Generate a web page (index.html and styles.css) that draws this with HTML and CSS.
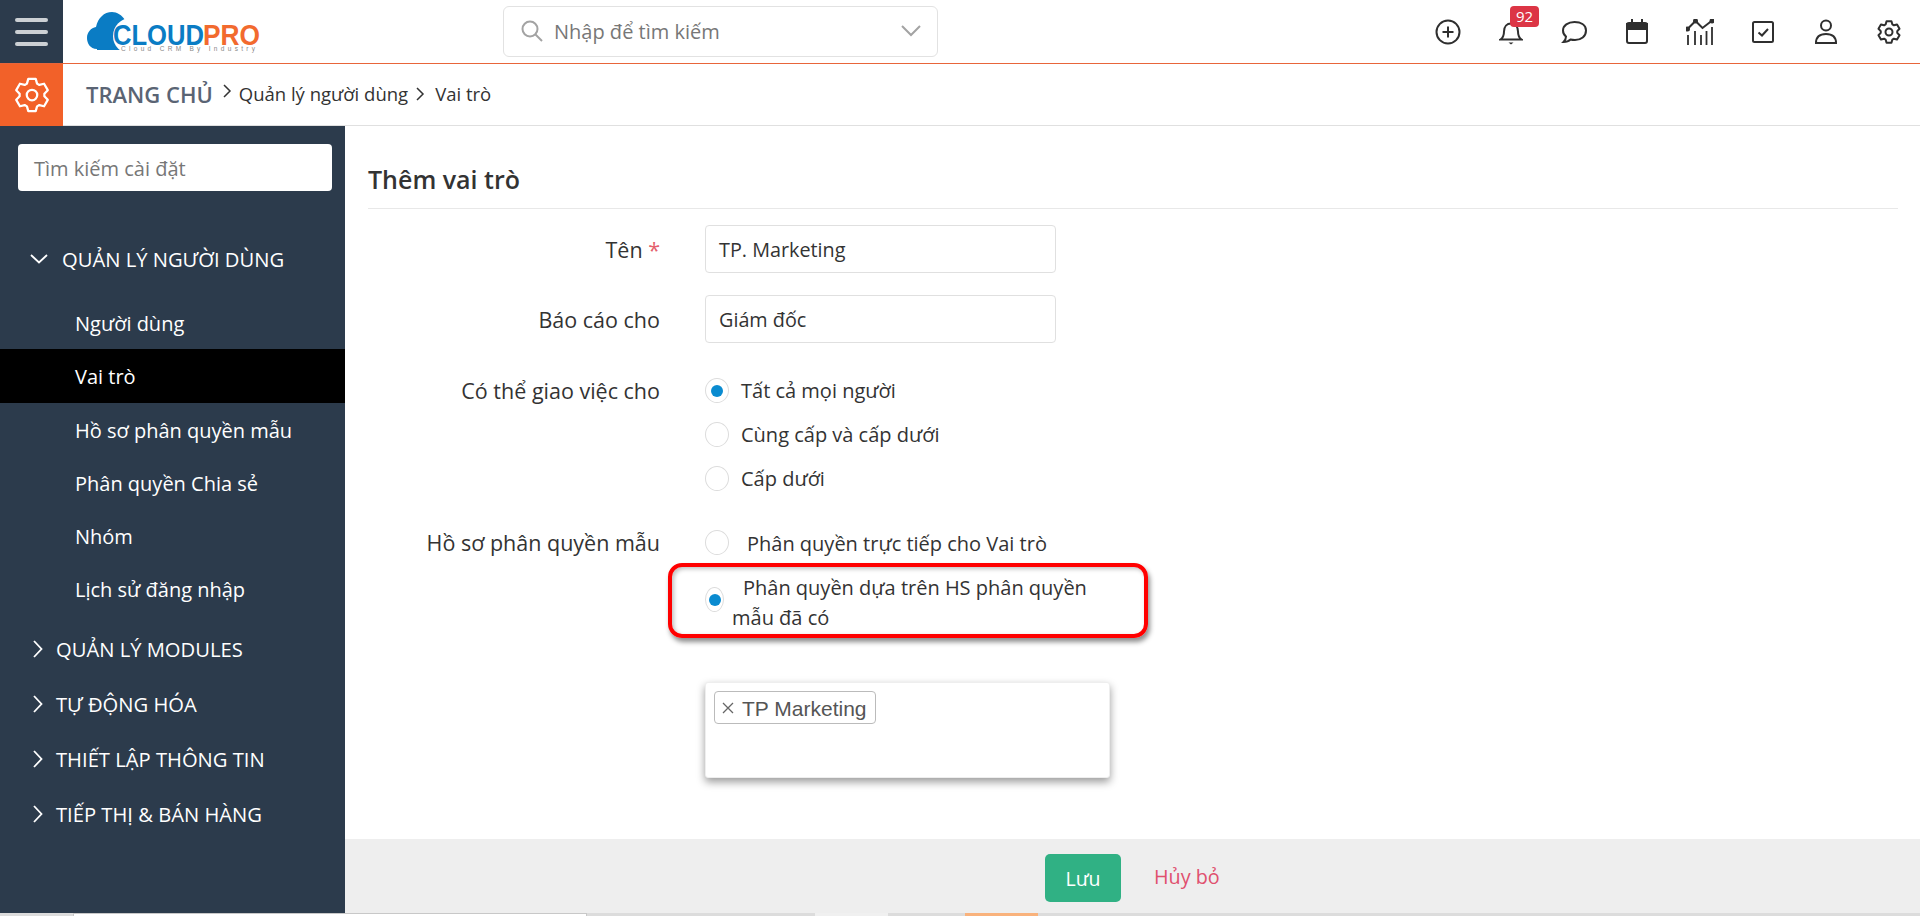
FILE: index.html
```html
<!DOCTYPE html>
<html lang="vi">
<head>
	<meta charset="UTF-8">
	<title>Thêm vai trò</title>
	<link rel="stylesheet" href="styles.css">
</head>
<body>
	<div class="page">
		<!-- thanh tren -->
		<header class="topbar">
			<div class="menu-btn"><span></span><span></span><span></span></div>
			<div class="logo">
				<svg width="180" height="44" viewBox="0 0 180 44">
					<path fill="#0a7cc4" d="M10 37C3 37 0 31 0 26c0-6 4-10 9-11C11 6 17 0 25 0c5 0 10 3 13 8 3-1 6 0 8 2v28H10z"/>
					<circle cx="44" cy="24" r="18" fill="#fff"/>
					<text x="26" y="33" class="logo-blue" textLength="91" lengthAdjust="spacingAndGlyphs">CLOUD</text>
					<text x="116" y="33" class="logo-orange" textLength="57" lengthAdjust="spacingAndGlyphs">PRO</text>
					<text x="34" y="39" class="logo-small" textLength="134">Cloud CRM By Industry</text>
				</svg>
			</div>
			<div class="top-search">
				<svg width="24" height="24" viewBox="0 0 24 24" fill="none" stroke="#a3a3a3" stroke-width="2"><circle cx="10" cy="10" r="7.500"/><path d="M15.500 15.500l6.500 6.500"/></svg>
				<span class="top-search-text">Nhập để tìm kiếm</span>
				<svg class="top-search-arrow" width="20" height="12" viewBox="0 0 20 12" fill="none" stroke="#a3a3a3" stroke-width="2"><path d="M1 1l9 9 9-9"/></svg>
			</div>
			<nav class="top-icons">
				<a class="ico"><svg width="26" height="26" viewBox="0 0 26 26" fill="none" stroke="#2f2f2f" stroke-width="2"><circle cx="13" cy="13" r="11.500"/><path d="M13 7.500v11M7.500 13h11"/></svg></a>
				<a class="ico"><svg width="24" height="26" viewBox="0 0 24 26" fill="none" stroke="#2f2f2f" stroke-width="2"><path d="M1.500 20.500c3-2 3.500-4 3.500-8 0-5 3-8 7-8s7 3 7 8c0 4 .5 6 3.500 8z"/><path d="M12 1.500v3"/><path d="M9.500 23.500h5l-2.500 2z" fill="#2f2f2f" stroke="none"/></svg><b class="badge">92</b></a>
				<a class="ico"><svg width="26" height="24" viewBox="0 0 26 24" fill="none" stroke="#2f2f2f" stroke-width="2"><path d="M13.500 2C7 2 2 5.500 2 10.500c0 2.500 1 4.500 3 6 0 2-1 4-2.500 5.500 3 0 5.500-1 7-2.500 1.500.4 3 .5 4.500.5 6 0 11-3.500 11-9.500S19.500 2 13.500 2z"/></svg></a>
				<a class="ico"><svg width="22" height="25" viewBox="0 0 22 25" fill="none" stroke="#2f2f2f" stroke-width="2"><rect x="1" y="4" width="20" height="20" rx="2"/><path d="M1 5h20v5H1z" fill="#2f2f2f"/><path d="M6 0v4M16 0v4"/></svg></a>
				<a class="ico"><svg width="28" height="26" viewBox="0 0 28 26" fill="none" stroke="#2f2f2f" stroke-width="2"><path d="M1.500 10L9.500 2l7 7 9-7"/><path d="M2 16v10M9 12v14M15 16v10M20.500 12v14M26 8v18" stroke-width="1.800"/><circle cx="1.500" cy="10" r="1.500" fill="#2f2f2f"/><circle cx="9.500" cy="2" r="1.500" fill="#2f2f2f"/><circle cx="26" cy="2" r="1.500" fill="#2f2f2f"/></svg></a>
				<a class="ico"><svg width="22" height="22" viewBox="0 0 22 22" fill="none" stroke="#2f2f2f" stroke-width="2"><rect x="1" y="1" width="20" height="20" rx="1.500"/><path d="M6.500 11.500l3.500 3 6-6.500"/></svg></a>
				<a class="ico"><svg width="22" height="25" viewBox="0 0 22 25" fill="none" stroke="#2f2f2f" stroke-width="2"><circle cx="11" cy="6.500" r="5"/><path d="M1 24c0-6 3-9 10-9s10 3 10 9z"/></svg></a>
				<a class="ico"><svg width="24" height="24" viewBox="0 0 24 24" fill="none" stroke="#2f2f2f" stroke-width="2" stroke-linejoin="round"><circle cx="12" cy="12" r="3.500"/><path d="M8.620 4.420L9.530 1.280H14.470L15.380 4.420L16.880 5.290L20.040 4.500L22.520 8.780L20.250 11.130V12.870L22.520 15.220L20.040 19.500L16.880 18.710L15.380 19.580L14.470 22.720H9.530L8.620 19.580L7.120 18.710L3.960 19.500L1.480 15.220L3.750 12.870V11.130L1.480 8.780L3.960 4.500L7.120 5.290z"/></svg></a>
			</nav>
		</header>

		<!-- duong dan -->
		<div class="crumbbar">
			<div class="crumb-icon">
				<svg width="36" height="36" viewBox="0 0 24 24" fill="none" stroke="#fff" stroke-width="1.500" stroke-linejoin="round"><circle cx="12" cy="12" r="3.500"/><path d="M8.620 4.420L9.530 1.280H14.470L15.380 4.420L16.880 5.290L20.040 4.500L22.520 8.780L20.250 11.130V12.870L22.520 15.220L20.040 19.500L16.880 18.710L15.380 19.580L14.470 22.720H9.530L8.620 19.580L7.120 18.710L3.960 19.500L1.480 15.220L3.750 12.870V11.130L1.480 8.780L3.960 4.500L7.120 5.290z"/></svg>
			</div>
			<div class="crumbs">
				<span class="crumb-home">TRANG CHỦ</span>
				<svg class="crumb-sep up" width="9" height="14" viewBox="0 0 9 14" fill="none" stroke="#333" stroke-width="1.500"><path d="M1 1l6 6-6 6"/></svg>
				<span>Quản lý người dùng</span>
				<svg class="crumb-sep" width="9" height="14" viewBox="0 0 9 14" fill="none" stroke="#333" stroke-width="1.500"><path d="M1 1l6 6-6 6"/></svg>
				<span>Vai trò</span>
			</div>
		</div>

		<div class="body-row">
			<!-- menu trai -->
			<aside class="sidebar">
				<div class="side-search">Tìm kiếm cài đặt</div>
				<div class="side-group open">
					<svg width="18" height="10" viewBox="0 0 18 10" fill="none" stroke="#fff" stroke-width="1.800"><path d="M1 1l8 7.500L17 1"/></svg>
					QUẢN LÝ NGƯỜI DÙNG
				</div>
				<ul class="side-list">
					<li>Người dùng</li>
					<li class="active">Vai trò</li>
					<li>Hồ sơ phân quyền mẫu</li>
					<li>Phân quyền Chia sẻ</li>
					<li>Nhóm</li>
					<li>Lịch sử đăng nhập</li>
				</ul>
				<div class="side-group"><svg width="10" height="18" viewBox="0 0 10 18" fill="none" stroke="#fff" stroke-width="1.800"><path d="M1 1l7.500 8L1 17"/></svg>QUẢN LÝ MODULES</div>
				<div class="side-group"><svg width="10" height="18" viewBox="0 0 10 18" fill="none" stroke="#fff" stroke-width="1.800"><path d="M1 1l7.500 8L1 17"/></svg>TỰ ĐỘNG HÓA</div>
				<div class="side-group"><svg width="10" height="18" viewBox="0 0 10 18" fill="none" stroke="#fff" stroke-width="1.800"><path d="M1 1l7.500 8L1 17"/></svg>THIẾT LẬP THÔNG TIN</div>
				<div class="side-group"><svg width="10" height="18" viewBox="0 0 10 18" fill="none" stroke="#fff" stroke-width="1.800"><path d="M1 1l7.500 8L1 17"/></svg>TIẾP THỊ &amp; BÁN HÀNG</div>
			</aside>

			<!-- noi dung -->
			<main class="main">
				<div class="content">
					<h2 class="title">Thêm vai trò</h2>
					<div class="form">
						<div class="label">Tên <em>*</em></div>
						<div class="input">TP. Marketing</div>

						<div class="label">Báo cáo cho</div>
						<div class="input">Giám đốc</div>

						<div class="label label-radio">Có thể giao việc cho</div>
						<div class="radios">
							<div class="radio-row"><i class="radio on"></i>Tất cả mọi người</div>
							<div class="radio-row"><i class="radio"></i>Cùng cấp và cấp dưới</div>
							<div class="radio-row"><i class="radio"></i>Cấp dưới</div>
						</div>

						<div class="label label-profile">Hồ sơ phân quyền mẫu</div>
						<div class="profile">
							<div class="profile-row"><i class="radio"></i><span class="profile-text">Phân quyền trực tiếp cho Vai trò</span></div>
							<div class="profile-wrap">
								<i class="radio on narrow"></i>
								<p>Phân quyền dựa trên HS phân quyền<br>mẫu đã có</p>
							</div>
							<div class="mark"></div>
							<div class="tagbox"><span class="tag"><svg class="tag-x" width="12" height="12" viewBox="0 0 12 12" fill="none" stroke="#666" stroke-width="1.300"><path d="M1 1l10 10M11 1L1 11"/></svg>TP Marketing</span></div>
						</div>
					</div>
				</div>
				<div class="footer">
					<a class="btn-save">Lưu</a>
					<a class="btn-cancel">Hủy bỏ</a>
				</div>
			</main>
		</div>

		<div class="strip"><span class="s1"></span><span class="s2"></span><span class="s3"></span></div>
	</div>
</body>
</html>
```

FILE: styles.css
```css
*{margin: 0;padding: 0;box-sizing: border-box;}
li{list-style: none;}
html,body{height: 100%;overflow: hidden;}
body{font-family: "Open Sans","Noto Sans",sans-serif;font-size: 20px;color: #333;background: #fff;}

.page{height: 916px;display: flex;flex-direction: column;}

.topbar{height: 64px;display: flex;align-items: center;border-bottom: 1px solid #e8653a;flex: none;}
.menu-btn{width: 63px;height: 63px;background: #2c3b4c;display: flex;flex-direction: column;justify-content: center;gap: 8px;padding: 0 15px;}
.menu-btn span{height: 4px;border-radius: 2px;background: #ccd0d4;}
.logo{margin-left: 24px;width: 180px;height: 44px;margin-top: 5px;}
.logo svg{display: block;}
.logo-blue{font: bold 29px "Liberation Sans",sans-serif;fill: #0a7cc4;}
.logo-orange{font: bold 29px "Liberation Sans",sans-serif;fill: #f26a2e;}
.logo-small{font: 6.500px "Liberation Sans",sans-serif;fill: #888;}
.top-search{margin-left: 236px;width: 435px;height: 51px;border: 1px solid #e2e2e2;border-radius: 6px;display: flex;align-items: center;padding: 0 16px;margin-top: -1px;}
.top-search-text{margin-left: 10px;font-size: 20px;color: #777;}
.top-search-arrow{margin-left: auto;}
.top-icons{display: flex;align-items: center;margin-left: auto;padding-right: 0;}
.ico{width: 63px;display: flex;justify-content: center;position: relative;}
.badge{position: absolute;left: 31px;top: -13px;width: 29px;height: 21px;background: #dc3545;border-radius: 4px;color: #fff;font-size: 15px;font-weight: 400;line-height: 21px;text-align: center;}

.crumbbar{height: 62px;display: flex;flex: none;border-bottom: 1px solid #e0e0e0;}
.crumb-icon{width: 63px;height: 62px;background: #f26129;display: flex;align-items: center;justify-content: center;}
.crumbs{display: flex;align-items: center;margin-left: 23px;padding-bottom: 2px;font-size: 18.500px;color: #333;}
.crumb-home{font-size: 22px;font-weight: 600;color: #5a6474;margin-right: 10px;}
.crumb-sep{margin: 0 9px 0 0;}
.crumb-sep.up{margin-top: -6px;margin-right: 7px;}
.crumbs .crumb-sep:not(.up){margin: 0 10px 0 8px;}

.body-row{flex: 1;display: flex;min-height: 0;}
.sidebar{width: 345px;flex: none;background: #2c3b4c;color: #fff;padding-top: 18px;}
.side-search{margin: 0 13px 0 18px;height: 47px;background: #fff;border-radius: 4px;color: #777;font-size: 20px;line-height: 49px;padding-left: 16px;}
.side-group{height: 55px;display: flex;align-items: center;gap: 13px;padding: 2px 0 0 33px;font-size: 20.200px;}
.side-group svg{flex: none;}
.side-group.open{margin-top: 40px;gap: 14px;height: 54px;padding-left: 30px;}
.side-list{margin-top: 11px;margin-bottom: 5px;}
.side-list li{height: 53.300px;line-height: 55px;padding-left: 75px;font-size: 20px;}
.side-list li.active{background: #000;}

.main{flex: 1;display: flex;flex-direction: column;min-width: 0;}
.content{flex: 1;padding: 0 22px 0 23px;}
.title{height: 83px;padding-top: 34px;font-size: 25px;line-height: 38px;font-weight: 600;color: #333;border-bottom: 1px solid #e8e8e8;}
.form{display: grid;grid-template-columns: 292px 1fr;column-gap: 45px;margin-top: 16px;align-items: start;}
.label{text-align: right;font-size: 21.500px;line-height: 44px;padding-top: 3px;}
.label em{color: #e4606d;font-style: normal;}
.label-radio{padding-top: 4px;}
.label-profile{margin-top: 21px;padding-top: 0;}
.input{width: 351px;height: 48px;border: 1px solid #e0e0e0;border-radius: 4px;line-height: 48px;padding-left: 13px;font-size: 19.800px;margin-bottom: 22px;}
.radios{margin-top: 3px;}
.radio-row{height: 44px;display: flex;align-items: center;gap: 12px;font-size: 20px;}
.radio{width: 24px;height: 25px;border-radius: 50%;border: 1px solid #dcdcdc;flex: none;display: inline-block;position: relative;background: #fff;}
.radio.on::after{content: "";position: absolute;left: 5px;top: 6px;width: 12px;height: 12px;border-radius: 50%;background: #0a8bd0;}
.radio.narrow{width: 19px;}
.radio.narrow.on::after{left: 3px;}

.profile{position: relative;margin-top: 20px;}
.profile-row{height: 44px;display: flex;align-items: center;gap: 18px;font-size: 20px;}
.profile-text{padding-top: 2px;}
.profile-wrap{display: flex;align-items: center;height: 70px;position: relative;}
.profile-wrap p{font-size: 20px;line-height: 30px;margin-left: 8px;text-indent: 11px;padding-top: 7px;}
.mark{position: absolute;left: -37px;top: 43px;width: 480px;height: 75px;border: 4px solid #f00;border-radius: 14px;box-shadow: 2px 4px 5px rgba(0,0,0,.45),inset 2px 2px 4px rgba(0,0,0,.25);}
.tagbox{margin-top: 48px;width: 405px;height: 96px;background: #fff;border-radius: 3px;box-shadow: 0 4px 8px rgba(0,0,0,.4);padding: 8px 8px;border: 1px solid #eee;}
.tag{display: inline-flex;align-items: center;height: 33px;width: 162px;border: 1px solid #bbb;border-radius: 4px;font: 21px "Liberation Sans",sans-serif;color: #555;padding: 2px 0 0 7px;}
.tag-x{margin: -2px 8px 0 0;flex: none;}

.footer{height: 74px;flex: none;background: #eee;display: flex;align-items: center;padding-left: 700px;}
.btn-save{width: 76px;height: 48px;background: #30b184;border-radius: 5px;color: #fff;text-align: center;line-height: 50px;font-size: 19.500px;margin-top: 3px;}
.btn-cancel{margin-left: 33px;color: #e0506e;font-size: 19.800px;}

.strip{height: 3px;flex: none;background: #dcdcdc;position: relative;display: flex;}
.strip .s1{width: 514px;margin-left: 73px;background: #fff;border: 1px solid #c8c8c8;border-bottom: 0;}
.strip .s2{width: 73px;margin-left: 228px;background: #f0f0f0;}
.strip .s3{width: 73px;margin-left: 77px;background: #f9b27c;}
```
